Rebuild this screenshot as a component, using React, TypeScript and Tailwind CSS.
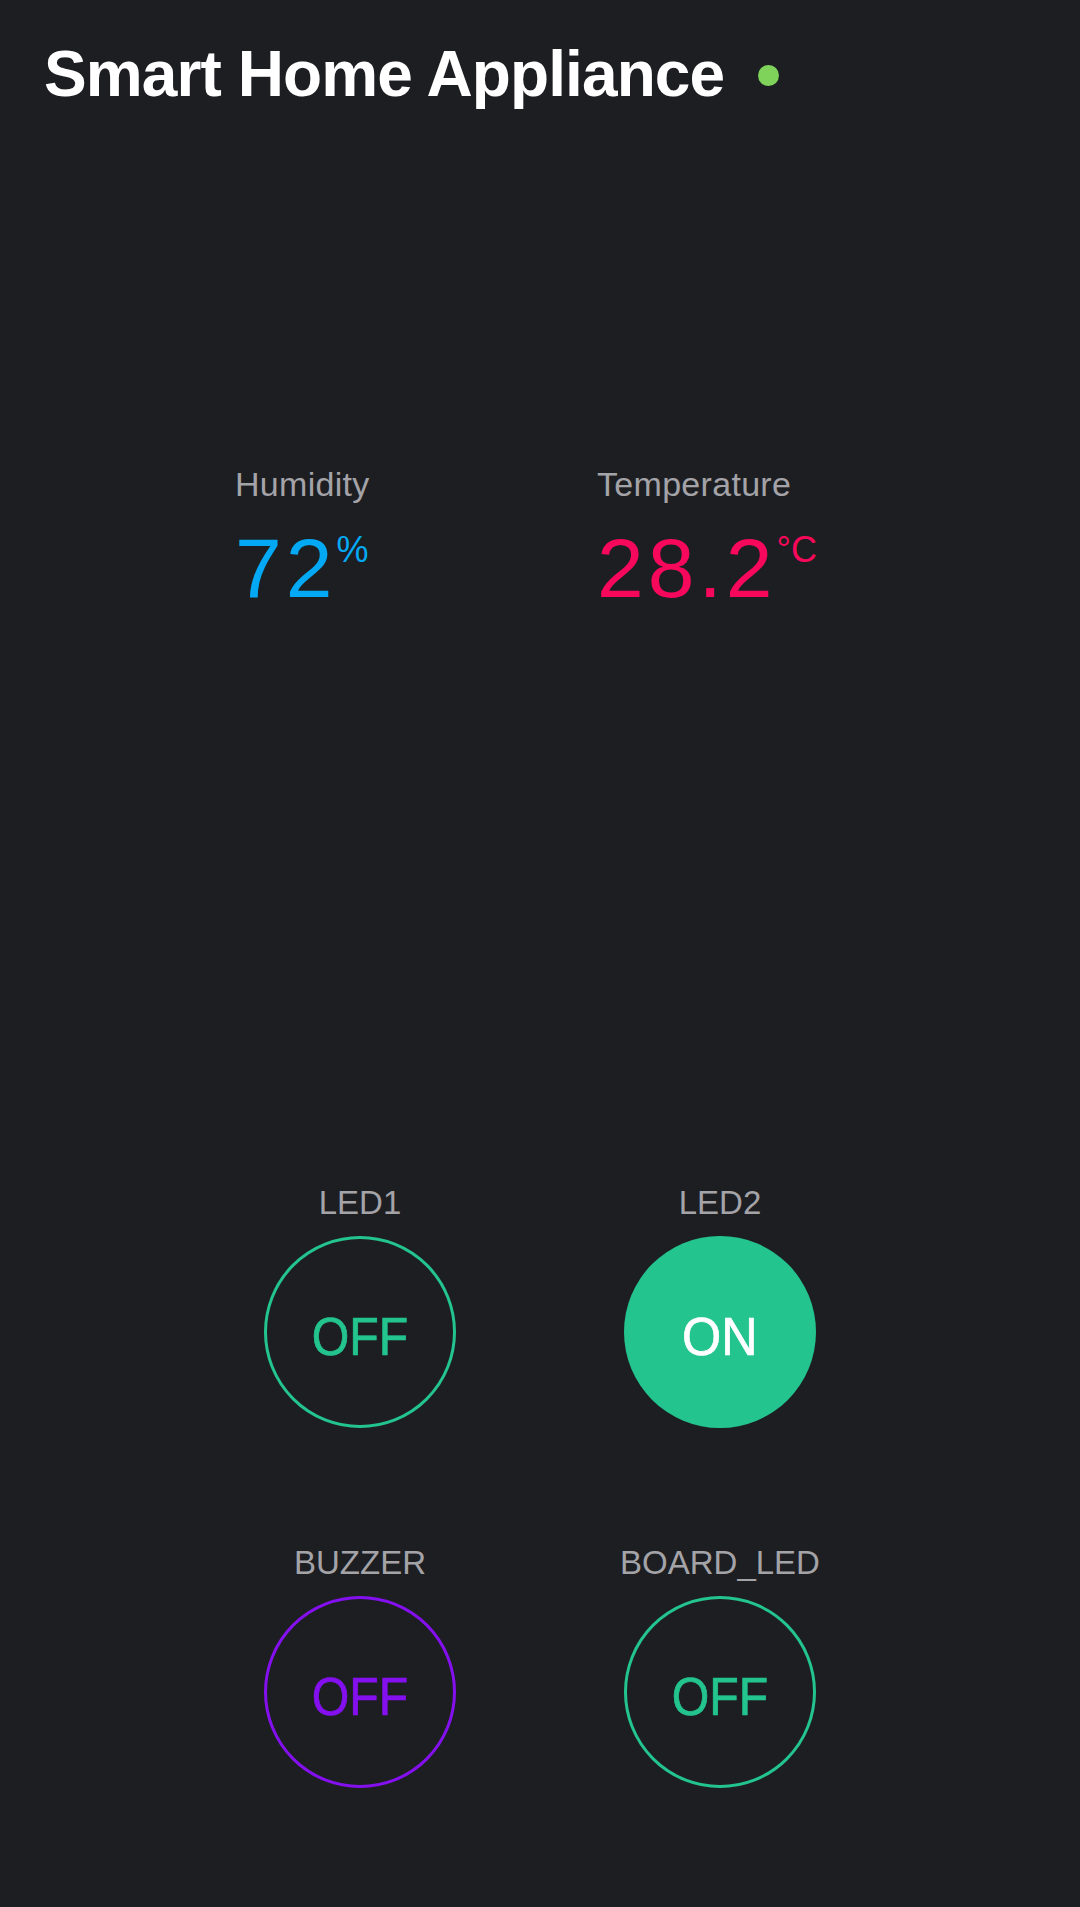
type Switch = {
  label: string;
  on: boolean;
  color: 'green' | 'violet';
};

const rows: Switch[][] = [
  [
    { label: 'LED1', on: false, color: 'green' },
    { label: 'LED2', on: true, color: 'green' },
  ],
  [
    { label: 'BUZZER', on: false, color: 'violet' },
    { label: 'BOARD_LED', on: false, color: 'green' },
  ],
];

function SwitchButton({ label, on, color }: Switch) {
  const ring =
    color === 'violet'
      ? 'border-[#8410ef] text-[#8410ef]'
      : 'border-[#23c48e] text-[#23c48e]';
  return (
    <div className="flex flex-col items-center">
      <span className="text-[33px] leading-[33px] text-[#a3a3a8]">{label}</span>
      {on ? (
        <button className="mt-[17px] pt-[8px] w-[192px] h-[192px] rounded-full bg-[#23c48e] text-white text-[53px] leading-none flex items-center justify-center">
          <span className="inline-block scale-x-[0.95] [-webkit-text-stroke:0.7px_currentColor]">ON</span>
        </button>
      ) : (
        <button
          className={`mt-[17px] pt-[8px] w-[192px] h-[192px] rounded-full border-[3px] text-[53px] leading-none flex items-center justify-center ${ring}`}
        >
          <span className="inline-block scale-x-[0.91] [-webkit-text-stroke:0.7px_currentColor]">OFF</span>
        </button>
      )}
    </div>
  );
}

function Reading({ label, value, unit, tone }: { label: string; value: string; unit: string; tone: string }) {
  return (
    <div className="flex flex-col">
      <span className="text-[34px] leading-[34px] tracking-[0.3px] text-[#a3a3a8]">{label}</span>
      <div className={`mt-[25px] flex items-start ${tone}`}>
        <span className="text-[84px] leading-[84px] tracking-[4px]">{value}</span>
        <span className="mt-[6px] text-[36px] leading-[36px]">{unit}</span>
      </div>
    </div>
  );
}

export default function App() {
  return (
    <div
      className="min-h-[1907px] w-full bg-[#1d1e22] text-white"
      style={{ fontFamily: '"Liberation Sans", Arial, Helvetica, sans-serif' }}
    >
      {/* header */}
      <div className="flex items-center pl-[44px] pt-[42px]">
        <h1 className="text-[64px] leading-[64px] font-bold tracking-[-0.9px]">Smart Home Appliance</h1>
        <span className="ml-[34px] mt-[2px] w-[21px] h-[21px] rounded-full bg-[#7fd35a]" />
      </div>

      {/* sensors */}
      <div className="mt-[361px] grid grid-cols-[362px_auto] pl-[235px]">
        <Reading label="Humidity" value="72" unit="%" tone="text-[#03a9f4]" />
        <Reading label="Temperature" value="28.2" unit="°C" tone="text-[#f8085a]" />
      </div>

      {/* switches */}
      <div className="mt-[576px] px-[180px] flex flex-col gap-[118px]">
        {rows.map((row, i) => (
          <div key={i} className="grid grid-cols-2">
            {row.map((s) => (
              <SwitchButton key={s.label} {...s} />
            ))}
          </div>
        ))}
      </div>
    </div>
  );
}
